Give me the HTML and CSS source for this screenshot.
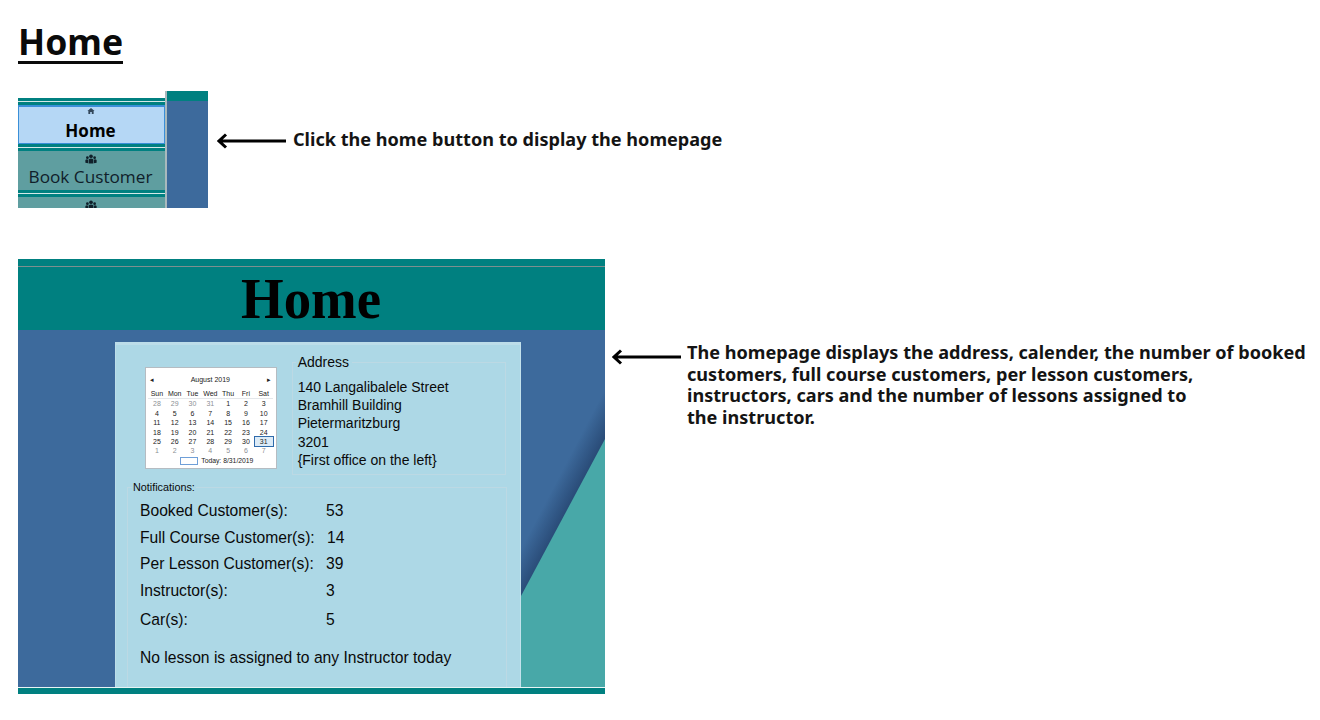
FILE: index.html
```html
<!DOCTYPE html>
<html lang="en">
<head>
    <meta charset="UTF-8">
    <meta name="viewport" content="width=device-width, initial-scale=1.0">
    <title>Home</title>
    <link rel="stylesheet" href="styles.css">
</head>
<body>
    <h1 class="page-title">Home</h1>

    <!-- Home button -->
    <div class="step step-nav">
        <div class="nav-shot">
            <div class="nav-list">
                <div class="nav-sep"></div>
                <div class="nav-item nav-active">
                    <svg class="nav-icon" viewBox="0 0 12 10"><path d="M6 0 L12 5 L10.4 5 L10.4 10 L7.3 10 L7.3 6.5 L4.7 6.5 L4.7 10 L1.6 10 L1.6 5 L0 5 Z" fill="#33475a"/></svg>
                    <span>Home</span>
                </div>
                <div class="nav-sep"></div>
                <div class="nav-item">
                    <svg class="nav-icon" viewBox="0 0 13 10"><use href="#people"/></svg>
                    <span>Book Customer</span>
                </div>
                <div class="nav-sep"></div>
                <div class="nav-item">
                    <svg class="nav-icon" viewBox="0 0 13 10">
                        <g id="people" fill="#10202a">
                            <circle cx="6.5" cy="2" r="2"/>
                            <circle cx="2.6" cy="3.6" r="1.5"/>
                            <circle cx="10.4" cy="3.6" r="1.5"/>
                            <path d="M4 10 L4 5.4 Q6.5 3.4 9 5.4 L9 10 Z"/>
                            <path d="M0.4 9 L0.4 6 Q2 4.8 3.4 5.8 L3.4 9.6 Z"/>
                            <path d="M12.6 9 L12.6 6 Q11 4.8 9.6 5.8 L9.6 9.6 Z"/>
                        </g>
                    </svg>
                </div>
            </div>
            <div class="nav-side"></div>
        </div>
        <svg class="arrow arrow-long" viewBox="0 0 70 16"><path d="M69 8 H2 M9 1.5 L2 8 L9 14.5" fill="none" stroke="#000" stroke-width="3"/></svg>
        <p class="note">Click the home button to display the homepage</p>
    </div>

    <!-- Homepage -->
    <div class="step step-home">
        <div class="home-shot">
            <div class="home-header"><span>Home</span></div>
            <div class="home-body">
                <svg class="home-fold" viewBox="0 0 84 357">
                    <defs>
                        <linearGradient id="foldShade" gradientUnits="userSpaceOnUse" x1="42" y1="187.5" x2="22" y2="177">
                            <stop offset="0" stop-color="#2a4c78"/>
                            <stop offset="1" stop-color="#3d6a9c"/>
                        </linearGradient>
                    </defs>
                    <rect width="84" height="357" fill="url(#foldShade)"/>
                    <polygon points="84,109 84,357 0,357 0,266" fill="#48a8a8"/>
                </svg>
                <div class="panel">
                    <div class="panel-top">
                        <div class="calendar">
                            <div class="cal-head"><span>&#9666;</span><span>August 2019</span><span>&#9656;</span></div>
                            <div class="cal-grid cal-days">
                                <span>Sun</span><span>Mon</span><span>Tue</span><span>Wed</span><span>Thu</span><span>Fri</span><span>Sat</span>
                            </div>
                            <div class="cal-grid">
                                <span class="dim">28</span><span class="dim">29</span><span class="dim">30</span><span class="dim">31</span><span>1</span><span>2</span><span>3</span>
                                <span>4</span><span>5</span><span>6</span><span>7</span><span>8</span><span>9</span><span>10</span>
                                <span>11</span><span>12</span><span>13</span><span>14</span><span>15</span><span>16</span><span>17</span>
                                <span>18</span><span>19</span><span>20</span><span>21</span><span>22</span><span>23</span><span>24</span>
                                <span>25</span><span>26</span><span>27</span><span>28</span><span>29</span><span>30</span><span class="today">31</span>
                                <span class="dim">1</span><span class="dim">2</span><span class="dim">3</span><span class="dim">4</span><span class="dim">5</span><span class="dim">6</span><span class="dim">7</span>
                            </div>
                            <div class="cal-foot"><i class="today-box"></i><span>Today: 8/31/2019</span></div>
                        </div>
                        <fieldset class="address">
                            <legend>Address</legend>
                            140 Langalibalele Street<br>
                            Bramhill Building<br>
                            Pietermaritzburg<br>
                            3201<br>
                            {First office on the left}
                        </fieldset>
                    </div>
                    <fieldset class="notifications">
                        <legend>Notifications:</legend>
                        <div class="stat"><span>Booked Customer(s):</span><b>53</b></div>
                        <div class="stat"><span>Full Course Customer(s):</span><b class="shift">14</b></div>
                        <div class="stat"><span>Per Lesson Customer(s):</span><b>39</b></div>
                        <div class="stat"><span>Instructor(s):</span><b>3</b></div>
                        <div class="stat stat-car"><span>Car(s):</span><b>5</b></div>
                        <p class="no-lesson">No lesson is assigned to any Instructor today</p>
                    </fieldset>
                </div>
            </div>
            <div class="home-footer"></div>
        </div>
        <svg class="arrow arrow-short" viewBox="0 0 70 16"><path d="M69 8 H2 M9 1.5 L2 8 L9 14.5" fill="none" stroke="#000" stroke-width="3"/></svg>
        <p class="note note-wide">The homepage displays the address, calender, the number of booked<br>customers, full course customers, per lesson customers,<br>instructors, cars and the number of lessons assigned to<br>the instructor.</p>
    </div>
</body>
</html>
```

FILE: styles.css
```css
body {
    margin: 0;
    padding: 0 0 0 18px;
    background: white;
    color: #111;
    font-family: "Noto Sans", sans-serif;
}

.page-title {
    display: inline-block;
    margin: 21px 0 0;
    font-size: 35.5px;
    font-weight: 700;
    line-height: 40px;
    color: #0a0a0a;
    border-bottom: 3px solid #0a0a0a;
    vertical-align: top;
}

.step {
    display: flex;
    align-items: flex-start;
}

.step-nav {
    margin-top: 27px;
}

.step-home {
    margin-top: 51px;
}

.note {
    margin: 0;
    font-size: 18.1px;
    font-weight: 700;
    line-height: 21.7px;
    color: #141414;
    white-space: nowrap;
}

.step-nav .note {
    margin: 38px 0 0 6px;
}

.note-wide {
    margin: 83px 0 0 5px;
}

.arrow {
    width: 70px;
    height: 16px;
    flex-shrink: 0;
}

.arrow-long {
    margin: 42px 0 0 9px;
}

.arrow-short {
    margin: 90px 0 0 7px;
}

/* Sidebar picture */
.nav-shot {
    display: flex;
    width: 190px;
    height: 117px;
    overflow: hidden;
    flex-shrink: 0;
}

.nav-list {
    width: 147px;
    padding-top: 7px;
    border-right: 2px solid #a9b9bd;
}

.nav-sep {
    height: 7px;
    background: linear-gradient(#008080 3px, #d5e8e8 3px, #d5e8e8 4px, #008080 4px);
}

.nav-item {
    height: 39px;
    box-sizing: border-box;
    display: flex;
    flex-direction: column;
    align-items: center;
    padding: 3px 2px 0 0;
    background: #5f9ea0;
    font-family: "Open Sans", sans-serif;
    font-size: 17.2px;
    line-height: 24px;
    color: #10202a;
}

.nav-active {
    padding-top: 1px;
    background: #b5d7f5;
    border: 1px solid #3a8fd8;
    border-top-width: 2px;
    font-size: 17px;
    font-weight: 700;
    color: #000;
}

.nav-icon {
    width: 12px;
    height: 10px;
    margin-bottom: 1px;
}

.nav-active .nav-icon {
    margin-bottom: 5px;
}

.nav-side {
    width: 41px;
    background: #3d6a9c;
    border-top: 10px solid #008080;
}

/* Homepage picture */
.home-shot {
    width: 587px;
    display: flex;
    flex-direction: column;
    flex-shrink: 0;
}

.home-header {
    height: 71px;
    box-sizing: border-box;
    padding-top: 8px;
    background: #008080;
    background-image: linear-gradient(#7d8f8f, #7d8f8f);
    background-size: 100% 1px;
    background-position: 0 7px;
    background-repeat: no-repeat;
    font-family: "Liberation Serif", serif;
    font-size: 58px;
    font-weight: 700;
    line-height: 63px;
    text-align: center;
    color: #000;
}

/* the title in the picture is narrower than the font */
.home-header span {
    display: inline-block;
    transform: scaleX(0.945);
}

.home-body {
    position: relative;
    height: 357px;
    background: #3d6a9c;
    padding: 12px 84px 0 97px;
    box-sizing: border-box;
    overflow: hidden;
}

.home-fold {
    position: absolute;
    right: 0;
    top: 0;
    width: 84px;
    height: 357px;
}

.panel {
    position: relative;
    height: 345px;
    box-sizing: border-box;
    padding: 19px 14px 0 11px;
    background: #add8e6;
    border-top: 3px solid #bcdde9;
    border-left: 1px solid #bcdde9;
    border-right: 1px solid #c4e2ec;
    font-family: "Liberation Sans", sans-serif;
    color: #0a0a0a;
    overflow: hidden;
}

.panel-top {
    display: flex;
    align-items: flex-start;
}

fieldset {
    margin: 0;
    border: 1px solid #bcd9e4;
    box-sizing: border-box;
}

legend {
    padding: 0 3px 0 2px;
}

.address {
    width: 215px;
    height: 119px;
    margin: -8px 0 0 15px;
    padding: 0 0 0 5px;
    font-size: 14px;
    line-height: 18.2px;
}

.address legend {
    margin: 0 0 10px -2px;
    line-height: 12px;
}

/* Calendar */
.calendar {
    width: 132px;
    height: 102px;
    box-sizing: border-box;
    margin: 3px 0 0 18px;
    padding: 7px 3px 0 2px;
    background: white;
    border: 1px solid #b5bcc2;
    font-size: 7px;
    line-height: 9.4px;
    color: #222;
}

.cal-head {
    display: flex;
    justify-content: space-between;
    height: 14px;
    padding: 0 2px;
}

.cal-grid {
    display: grid;
    grid-template-columns: repeat(7, 1fr);
    text-align: center;
}

.cal-days {
    border-bottom: 1px solid #e4e7ea;
}

.dim {
    color: #8c8f94;
}

.today {
    outline: 1px solid #2f6bab;
    background: #dcebf7;
}

.cal-foot {
    display: flex;
    justify-content: center;
    align-items: center;
    gap: 3px;
    padding-left: 13px;
    font-size: 6.8px;
}

.today-box {
    width: 16px;
    height: 6px;
    border: 1px solid #6f9fd8;
}

/* Notifications */
.notifications {
    height: 230px;
    width: 380px;
    margin-top: 6px;
    padding: 0 0 0 12px;
    font-size: 15.65px;
}

.notifications legend {
    margin-left: -8px;
    font-size: 10.8px;
    line-height: 12px;
    padding: 0 1px;
}

.stat {
    display: flex;
    height: 26.5px;
    line-height: 26px;
}

.stat:first-of-type {
    margin-top: 5px;
}

.stat span {
    width: 186px;
}

.stat b {
    font-weight: 400;
}

.stat .shift {
    margin-left: 1px;
}

.stat-car {
    margin-top: 3px;
}

.no-lesson {
    margin: 13px 0 0;
    line-height: 22px;
}

.home-footer {
    height: 7px;
    background: #008080;
    border-top: 1px solid #e8f4f4;
    box-sizing: border-box;
}
```
